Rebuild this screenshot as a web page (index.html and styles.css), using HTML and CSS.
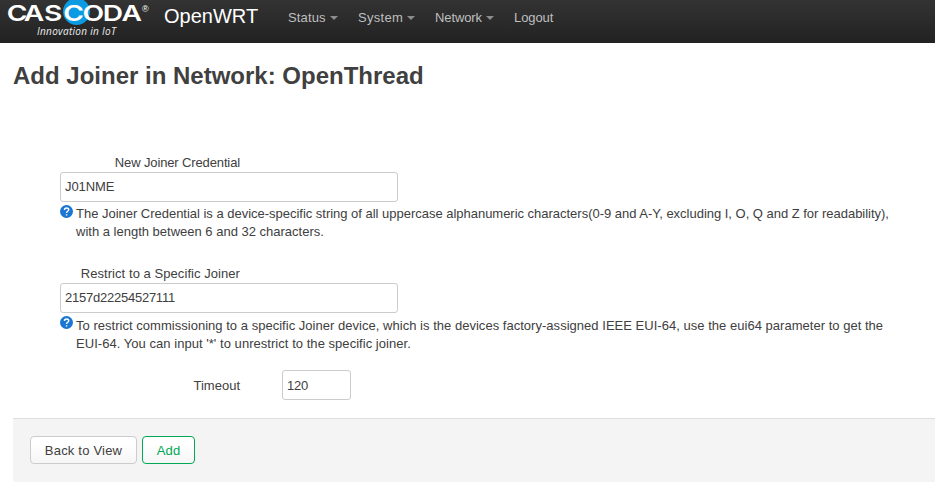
FILE: index.html
```html
<!DOCTYPE html>
<html lang="en">
<head>
<meta charset="utf-8">
<title>Add Joiner</title>
<link rel="stylesheet" href="styles.css">
</head>
<body>
<header class="navbar">
  <svg class="logo" width="150" height="43" viewBox="0 0 150 43" role="img" aria-label="Cascoda">
    <circle cx="76.5" cy="11.5" r="13.5" fill="#0a9be3"/>
    <g class="wordmark" transform="scale(1.28 1)">
      <text y="21" x="5.2 18.6 34.4 49.4 64.4 80.2 94.9">CASCODA</text>
    </g>
    <text class="reg" x="142" y="12">®</text>
    <text class="tagline" x="37" y="35" textLength="79">Innovation in IoT</text>
  </svg>
  <a class="brand">OpenWRT</a>
  <nav class="menu">
    <a class="dropdown status">Status</a>
    <a class="dropdown system">System</a>
    <a class="dropdown network">Network</a>
    <a class="logout">Logout</a>
  </nav>
</header>
<main>
  <h1>Add Joiner in Network: OpenThread</h1>
  <form>
    <section class="field">
      <label class="l1" for="credential">New Joiner Credential</label>
      <input id="credential" type="text" value="J01NME">
      <div class="help">
        <svg width="13" height="13" viewBox="0 0 13 13"><circle cx="6.5" cy="6.5" r="6.5" fill="#1976d2"/><path d="M4.5 5C4.5 2.3 8.7 2.3 8.7 4.7C8.7 6.3 6.6 6.2 6.6 8M6.6 9.2V10.6" fill="none" stroke="#fff" stroke-width="1.5"/></svg>
        <p><span class="a1">The Joiner Credential is a device-specific string of all uppercase alphanumeric characters(0-9 and A-Y, excluding I, O, Q and Z for readability),</span><br><span class="a2">with a length between 6 and 32 characters.</span></p>
      </div>
    </section>
    <section class="field second">
      <label class="l2" for="joiner">Restrict to a Specific Joiner</label>
      <input id="joiner" type="text" value="2157d22254527111">
      <div class="help">
        <svg width="13" height="13" viewBox="0 0 13 13"><circle cx="6.5" cy="6.5" r="6.5" fill="#1976d2"/><path d="M4.5 5C4.5 2.3 8.7 2.3 8.7 4.7C8.7 6.3 6.6 6.2 6.6 8M6.6 9.2V10.6" fill="none" stroke="#fff" stroke-width="1.5"/></svg>
        <p><span class="b1">To restrict commissioning to a specific Joiner device, which is the devices factory-assigned IEEE EUI-64, use the eui64 parameter to get the</span><br><span class="b2">EUI-64. You can input '*' to unrestrict to the specific joiner.</span></p>
      </div>
    </section>
    <section class="timeout">
      <label class="l3" for="timeout">Timeout</label>
      <input id="timeout" type="text" value="120">
    </section>
    <footer class="actions">
      <button type="button">Back to View</button>
      <button type="button" class="add">Add</button>
    </footer>
  </form>
</main>
</body>
</html>
```
FILE: styles.css
```css
* { box-sizing: border-box; }
body {
  margin: 0;
  background: #fff;
  color: #404040;
  font: 13px/18px "Liberation Sans", Arial, sans-serif;
  overflow: hidden;
}
.navbar {
  display: flex;
  height: 43px;
  background: linear-gradient(#333, #222);
  white-space: nowrap;
}
.logo { flex: none; }
.wordmark text { font: 600 22px Inter, sans-serif; fill: #fff; }
.reg { font: 9px "Liberation Sans", sans-serif; fill: #fff; }
.tagline { font: italic 10px "Open Sans", sans-serif; fill: #eee; }
.brand {
  width: 123px;
  margin-left: 14px;
  color: #fff;
  font-size: 20px;
  line-height: 32px;
}
.menu { display: flex; color: #bfbfbf; line-height: 36px; }
.menu a { margin-left: 1px; }
.menu .status { width: 69px; letter-spacing: 0.15px; }
.menu .system { width: 76px; letter-spacing: 0.3px; }
.menu .network { width: 78px; letter-spacing: -0.1px; }
.menu .logout { letter-spacing: -0.1px; }
.dropdown::after {
  content: "";
  display: inline-block;
  margin-left: 4px;
  vertical-align: 2px;
  border: 4px solid transparent;
  border-top-color: #8c8c8c;
  border-bottom: 0;
}
main { padding-left: 13px; }
h1 { margin: 15px 0 0; font-size: 24px; line-height: 36px; }
form { padding-top: 60px; }
.field { display: flex; flex-direction: column; height: 111px; padding-left: 47px; }
label { width: 180px; height: 18px; text-align: right; }
.l1 { letter-spacing: -0.13px; }
.l2 { letter-spacing: 0.06px; }
.a1 { letter-spacing: -0.018px; }
.b1 { letter-spacing: 0.026px; }
.b2 { letter-spacing: 0.04px; }
.second p { padding-top: 1px; }
input {
  width: 338px;
  height: 30px;
  padding: 0 4px 2px;
  border: 1px solid #ccc;
  border-radius: 3px;
  color: #404040;
  background: #fff;
  font: inherit;
}
#credential { letter-spacing: -0.1px; }
#joiner { letter-spacing: -0.24px; }
.help { display: flex; margin-top: 3px; gap: 3px; }
.help svg { flex: none; }
.help p { margin: 0; white-space: nowrap; }
.timeout { display: flex; gap: 42px; padding-left: 47px; margin-top: -6px; }
.timeout label { height: 30px; line-height: 31px; }
.timeout input { width: 69px; padding: 0 4px; letter-spacing: -0.2px; }
.actions {
  display: flex;
  gap: 5px;
  height: 64px;
  margin-top: 18px;
  padding: 17px;
  border-top: 1px solid #ddd;
  border-radius: 0 0 0 3px;
  background: #f4f4f4;
}
button {
  width: 107px;
  height: 28px;
  padding: 1px 0 0;
  border: 1px solid #ccc;
  border-radius: 4px;
  background: linear-gradient(#fff, #fff 25%, #f5f5f5);
  color: #404040;
  font: 13px/18px "Liberation Sans", Arial, sans-serif;
  letter-spacing: 0.2px;
}
.add { width: 53px; border-color: #00a854; color: #00a854; }
```
